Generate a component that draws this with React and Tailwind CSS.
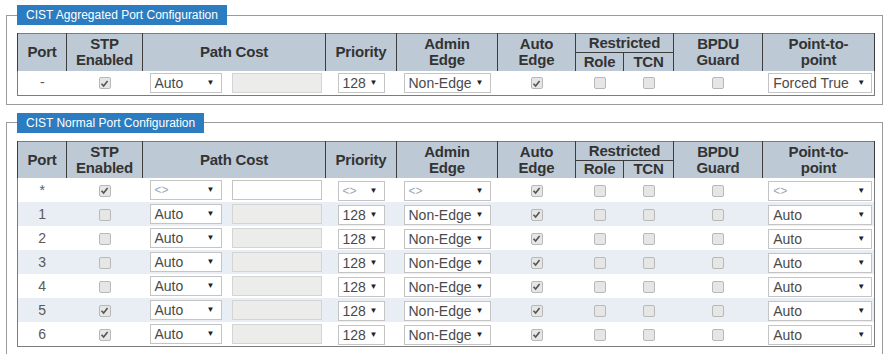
import React from 'react';

const FONT = { fontFamily: '"Liberation Sans", Arial, sans-serif' };

const COLS = [49, 76, 183, 71, 101, 78, 48, 50, 89, 112];

function Check({ on }) {
  return (
    <span className="inline-flex items-center justify-center w-[12px] h-[12px] rounded-[2px] border border-[#b8b8b8] bg-[#e6e6e6] align-middle">
      {on && (
        <svg width="9" height="9" viewBox="0 0 9 9">
          <path d="M1.5 4.8 L3.6 7 L7.6 2" fill="none" stroke="#555" strokeWidth="1.6" />
        </svg>
      )}
    </span>
  );
}

function Sel({ value, w, dim }) {
  return (
    <div
      className="inline-flex items-center justify-between h-[20px] bg-white border border-[#c4c4c4] pl-[4px] pr-[6px] text-[14px] leading-none align-middle"
      style={{ width: w }}>
      <span className={dim ? 'text-[#9aa8b8] text-[12px]' : 'text-[#4a4a4a]'}>{value}</span>
      <span className="text-[8px] text-[#222]">▼</span>
    </div>
  );
}

function Header() {
  const th = 'border-x border-[#3c3c3c] bg-[#bdcad6] text-[#333] font-bold text-[15px] leading-[16px] text-center px-1 tracking-[-0.2px]';
  return (
    <thead>
      <tr className="h-[19px]">
        <th rowSpan={2} className={th}>Port</th>
        <th rowSpan={2} className={th}>STP<br />Enabled</th>
        <th rowSpan={2} className={th}>Path Cost</th>
        <th rowSpan={2} className={th}>Priority</th>
        <th rowSpan={2} className={th}>Admin<br />Edge</th>
        <th rowSpan={2} className={th}>Auto<br />Edge</th>
        <th colSpan={2} className={th + ' border-b border-b-[#3c3c3c]'}>Restricted</th>
        <th rowSpan={2} className={th}>BPDU<br />Guard</th>
        <th rowSpan={2} className={th}>Point-to-<br />point</th>
      </tr>
      <tr className="h-[18px]">
        <th className={th}>Role</th>
        <th className={th}>TCN</th>
      </tr>
    </thead>
  );
}

function Row({ r, alt, h }) {
  const td = 'p-0 text-center';
  const star = r.port === '*';
  return (
    <tr className={alt ? 'bg-[#e8eef4]' : 'bg-white'} style={{ height: h }}>
      <td className={td + ' text-[14px] text-[#5a5a5a]'}>{r.port}</td>
      <td className={td}><Check on={r.stp} /></td>
      <td className="p-0">
        <div className="flex items-center pl-[7px] gap-[10px]">
          <Sel value={star ? '<>' : 'Auto'} w={72} dim={star} />
          <div className={(star ? 'bg-white border-[#c4c4c4]' : 'bg-[#ececea] border-[#d4d4d4]') + ' w-[90px] h-[20px] border'} />
        </div>
      </td>
      <td className={td}><Sel value={star ? '<>' : '128'} w={47} dim={star} /></td>
      <td className={td}><Sel value={star ? '<>' : 'Non-Edge'} w={87} dim={star} /></td>
      <td className={td}><Check on /></td>
      <td className={td}><Check /></td>
      <td className={td}><Check /></td>
      <td className={td}><Check /></td>
      <td className={td + ' pl-[4px]'}><Sel value={r.ptp} w={104} dim={star} /></td>
    </tr>
  );
}

function PortTable({ rows, heights }) {
  return (
    <table className="border-collapse border border-[#7c7c7c] table-fixed w-[857px]">
      <colgroup>
        {COLS.map((c, i) => <col key={i} style={{ width: c }} />)}
      </colgroup>
      <Header />
      <tbody>
        {rows.map((r, i) => <Row key={i} r={r} alt={i % 2 === 1} h={heights[i]} />)}
      </tbody>
    </table>
  );
}

function Box({ title, children, className }) {
  return (
    <fieldset className={'border border-[#9a9a9a] w-[876px] pl-[10px] pr-[7px] ' + className}>
      <legend className="bg-[#2b7cc0] text-white text-[12px] leading-[20px] px-[9px] ml-0">{title}</legend>
      <div className="pt-[8px]">{children}</div>
    </fieldset>
  );
}

const normal = [
  { port: '*', stp: true, ptp: '<>' },
  { port: '1', stp: false, ptp: 'Auto' },
  { port: '2', stp: false, ptp: 'Auto' },
  { port: '3', stp: false, ptp: 'Auto' },
  { port: '4', stp: false, ptp: 'Auto' },
  { port: '5', stp: true, ptp: 'Auto' },
  { port: '6', stp: true, ptp: 'Auto' },
];

export default function App() {
  return (
    <div className="bg-white w-[887px] h-[354px] overflow-hidden pl-[6px] pt-[5px]" style={FONT}>
      <Box title="CIST Aggregated Port Configuration" className="pb-[8px]">
        <PortTable rows={[{ port: '-', stp: true, ptp: 'Forced True' }]} heights={[24]} />
      </Box>
      <Box title="CIST Normal Port Configuration" className="mt-[8px] pb-[24px]">
        <PortTable rows={normal} heights={[24, 23, 24, 23, 24, 23, 24]} />
      </Box>
    </div>
  );
}
